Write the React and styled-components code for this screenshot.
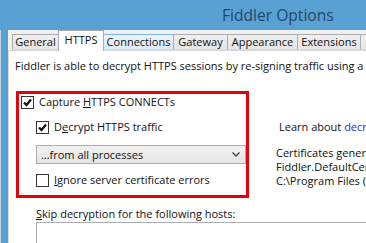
import styled, { createGlobalStyle } from "styled-components";

const Global = createGlobalStyle`
  html, body { margin: 0; padding: 0; background: #fff; }
  body { font-family: "Open Sans", "Noto Sans", sans-serif; font-size: 11px; color: #111; }
`;

const Window = styled.div`
  width: 366px;
  height: 243px;
  overflow: hidden;
  display: flex;
  flex-direction: column;
  background: #5aa1d3;
`;

const TitleBar = styled.div`
  height: 30px;
  flex: none;
  display: flex;
  align-items: center;
  padding-left: 222px;
  font-size: 15.6px;
  color: #21486b;
  white-space: nowrap;
`;

const Body = styled.div`
  flex: 1;
  display: flex;
  min-height: 0;
`;

const Frame = styled.div`
  width: 7px;
  flex: none;
  border-left: 1px solid #c9d6df;
  background: #5aa1d3;
`;

const Content = styled.div`
  flex: 1;
  display: flex;
  flex-direction: column;
  background: #f0f0f0;
  min-width: 0;
`;

const TabStrip = styled.div`
  height: 20px;
  flex: none;
  display: flex;
  align-items: flex-end;
  padding-left: 5px;
  position: relative;
  z-index: 1;
  white-space: nowrap;
`;

const Tab = styled.div`
  width: ${(p) => p.$w}px;
  flex: none;
  box-sizing: border-box;
  height: ${(p) => (p.$active ? 21 : 16)}px;
  margin-bottom: ${(p) => (p.$active ? -1 : 0)}px;
  display: flex;
  align-items: center;
  justify-content: center;
  padding-bottom: ${(p) => (p.$active ? 3 : 1)}px;
  border: 1px solid ${(p) => (p.$hover ? "#7eb4ea" : "#acacac")};
  border-bottom: ${(p) => (p.$active ? "none" : "1px solid #d9d9d9")};
  margin-left: -1px;
  background: ${(p) =>
    p.$active ? "#fff" : p.$hover ? "linear-gradient(#ecf4fc, #dcecfc)" : "linear-gradient(#f0f0f0, #e5e5e5)"};
  position: relative;
  z-index: ${(p) => (p.$active ? 2 : p.$hover ? 1 : 0)};
`;

const Panel = styled.div`
  flex: 1;
  background: #fff;
  border-top: 1px solid #d9d9d9;
  border-left: 1px solid #d9d9d9;
  padding: 8px 0 0 7px;
  white-space: nowrap;
  overflow: hidden;
`;

const Intro = styled.div`
  line-height: 14px;
  margin-left: -1px;
`;

const Middle = styled.div`
  display: flex;
  align-items: flex-start;
  margin-top: 18px;
`;

const RedBox = styled.div`
  width: 236px;
  box-sizing: border-box;
  border: 3px solid #e5000b;
  padding: 0 0 8px 2px;
  display: flex;
  flex-direction: column;
  gap: 11px;
`;

const Row = styled.label`
  display: flex;
  align-items: center;
  height: 14px;
  line-height: 14px;
  gap: 5px;
  margin-left: ${(p) => p.$indent || 0}px;
  margin-top: ${(p) => p.$mt || 0}px;
`;

const Box = styled.span`
  width: 13px;
  height: 13px;
  box-sizing: border-box;
  border: 1px solid #333;
  background: #fff;
  display: flex;
  align-items: center;
  justify-content: center;
  flex: none;
`;

const Select = styled.div`
  margin-left: 15px;
  width: 210px;
  height: 19px;
  box-sizing: border-box;
  border: 1px solid #acacac;
  background: linear-gradient(#f0f0f0, #e5e5e5);
  display: flex;
  align-items: center;
  justify-content: space-between;
  padding: 0 5px 0 4px;
`;

const Info = styled.div`
  margin-left: 27px;
  display: flex;
  flex-direction: column;
  line-height: 14px;
`;

const Learn = styled.div`
  margin-top: 29px;
  padding-left: 3px;
`;

const Link = styled.span`
  color: #2a2ad0;
`;

const CertText = styled.div`
  margin-top: 12px;
`;

const SkipLabel = styled.div`
  margin: 9px 0 0 20px;
  line-height: 14px;
`;

const Hosts = styled.div`
  margin: 1px 0 0 20px;
  height: 40px;
  border: 1px solid #abadb3;
  border-right: none;
  background: #fff;
`;

function Check({ checked }) {
  return (
    <Box>
      {checked && (
        <svg width="9" height="9" viewBox="0 0 9 9">
          <path d="M1 4.5 L3.5 7 L8 1.5" fill="none" stroke="#111" strokeWidth="2.2" />
        </svg>
      )}
    </Box>
  );
}

const tabs = [
  ["General", 47],
  ["HTTPS", 46, true],
  ["Connections", 71, false, true],
  ["Gateway", 55],
  ["Appearance", 71],
  ["Extensions", 64],
  ["Tools", 50],
];

export default function App() {
  return (
    <>
      <Global />
      <Window>
        <TitleBar>Fiddler Options</TitleBar>
        <Body>
          <Frame />
          <Content>
            <TabStrip>
              {tabs.map(([name, w, active, hover]) => (
                <Tab key={name} $w={w} $active={active} $hover={hover}>
                  {name}
                </Tab>
              ))}
            </TabStrip>
            <Panel>
              <Intro>Fiddler is able to decrypt HTTPS sessions by re-signing traffic using a self-generated certificate.</Intro>
              <Middle>
                <RedBox>
                  <Row $mt={1}>
                    <Check checked />
                    <span>Capture <u>H</u>TTPS CONNECTs</span>
                  </Row>
                  <Row $indent={15}>
                    <Check checked />
                    <span>D<u>e</u>crypt HTTPS traffic</span>
                  </Row>
                  <Select>
                    <span>…from all processes</span>
                    <svg width="8" height="5" viewBox="0 0 8 5">
                      <path d="M0.5 0.5 L4 4 L7.5 0.5" fill="none" stroke="#444" strokeWidth="1.3" />
                    </svg>
                  </Select>
                  <Row $indent={15} $mt={-2}>
                    <Check />
                    <span><u>I</u>gnore server certificate errors</span>
                  </Row>
                </RedBox>
                <Info>
                  <Learn>
                    Learn about <Link>decryption</Link>
                  </Learn>
                  <CertText>
                    <div>Certificates generated by CertMaker.dll</div>
                    <div>Fiddler.DefaultCertificateProvider</div>
                    <div>C:\Program Files (x86)\Fiddler2</div>
                  </CertText>
                </Info>
              </Middle>
              <SkipLabel>
                <u>S</u>kip decryption for the following hosts:
              </SkipLabel>
              <Hosts />
            </Panel>
          </Content>
        </Body>
      </Window>
    </>
  );
}
